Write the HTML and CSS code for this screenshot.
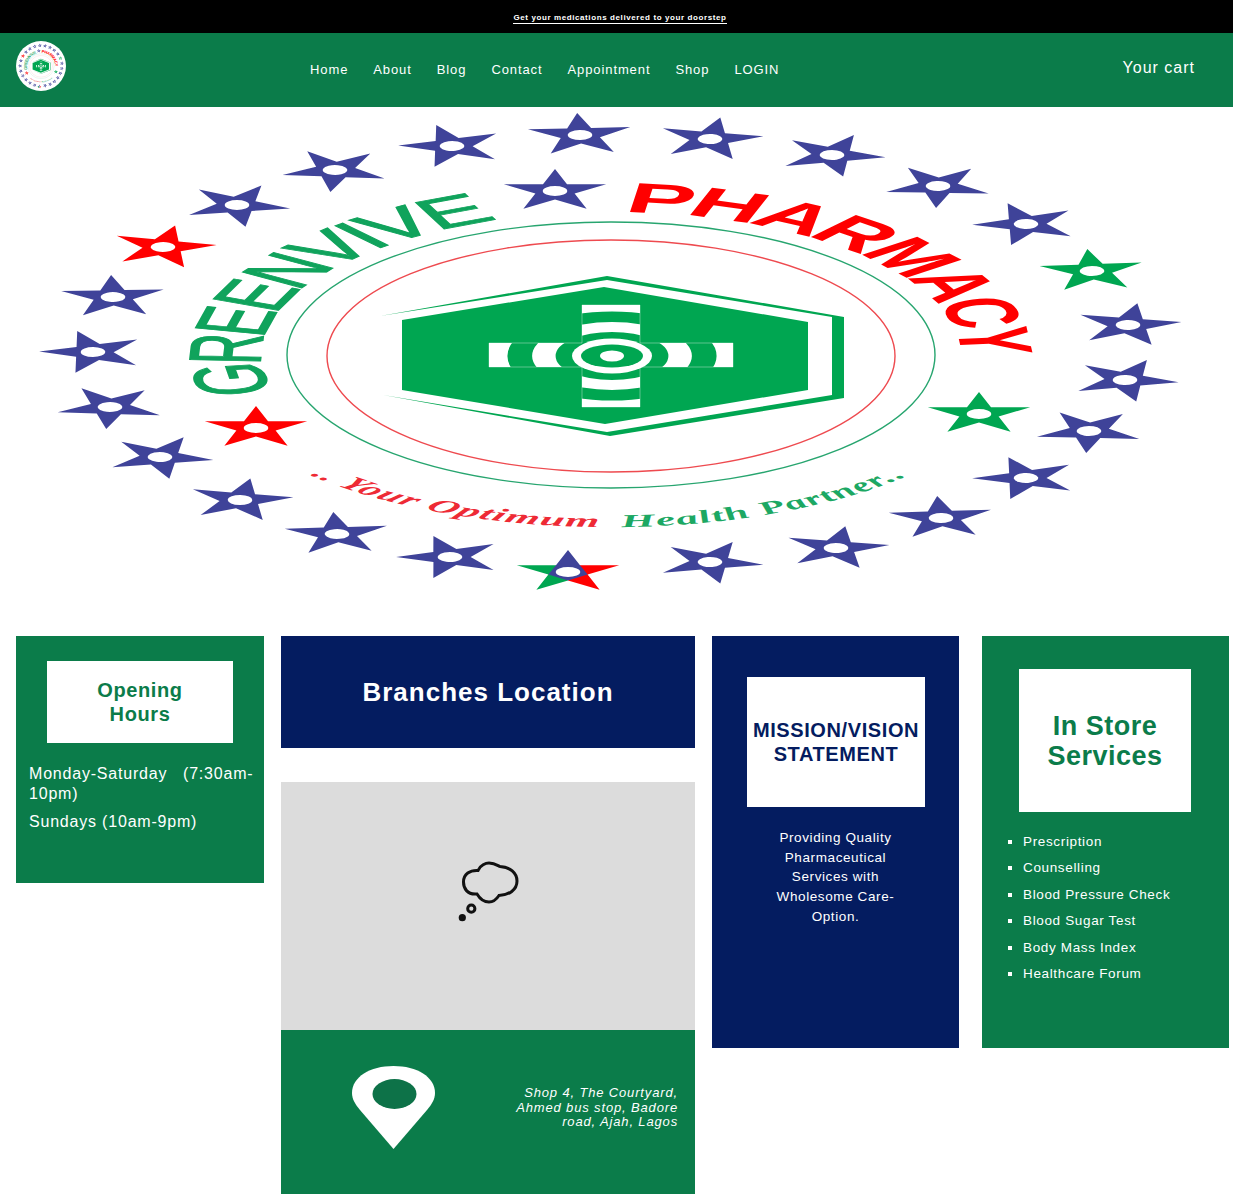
FILE: index.html
```html
<!DOCTYPE html>
<html lang="en">
<head>
<meta charset="utf-8">
<title>Greenvive Pharmacy</title>
<link rel="stylesheet" href="styles.css">
</head>
<body>
<div class="promo"><a class="promo-link">Get your medications delivered to your doorstep</a></div>
<header class="nav">
  <div class="brand">
    <svg class="brand-logo" viewBox="40 108 1140 490" preserveAspectRatio="none"><use href="#logo-art"/></svg>
  </div>
  <nav class="links">
    <a>Home</a><a>About</a><a>Blog</a><a>Contact</a><a>Appointment</a><a>Shop</a><a>LOGIN</a>
  </nav>
  <a class="cart">Your cart</a>
</header>

<svg class="hero" viewBox="0 107 1233 513">
  <defs>
    <path id="star" fill-rule="evenodd" d="M0-22 4.9-6.8H20.9L8 2.6 12.9 17.8 0 8.4-12.9 17.8-8 2.6-20.9-6.8H-4.9ZM5 0A5 5 0 1 0-5 0 5 5 0 1 0 5 0Z"/>
    <clipPath id="cross-clip">
      <path d="M582 305H640V343H733V367H640V407H582V367H489V343H582Z"/>
    </clipPath>
    <path id="arc-green" d="M-139 37.3A144 144 0 0 1-40-138.300"/>
    <path id="arc-red" d="M5-143.900A144 144 0 0 1 144 4"/>
    <path id="arc-tag-red" d="M-124 119A171 171 0 0 0-5 171"/>
    <path id="arc-tag-green" d="M4.5 171A171 171 0 0 0 122 120"/>
  </defs>
  <g id="logo-art">
    <g class="st-blue">
      <use href="#star" transform="translate(580 135) scale(2.45 1) rotate(-3)"/>
      <use href="#star" transform="translate(452 146) scale(2.45 1) rotate(-17)"/>
      <use href="#star" transform="translate(335 170) scale(2.45 1) rotate(-31)"/>
      <use href="#star" transform="translate(237 205) scale(2.45 1) rotate(-45)"/>
      <use href="#star" transform="translate(113 297) scale(2.45 1) rotate(-74)"/>
      <use href="#star" transform="translate(93 352) scale(2.45 1) rotate(-89)"/>
      <use href="#star" transform="translate(110 407) scale(2.45 1) rotate(-104)"/>
      <use href="#star" transform="translate(160 457) scale(2.45 1) rotate(-118)"/>
      <use href="#star" transform="translate(240 500) scale(2.45 1) rotate(-133)"/>
      <use href="#star" transform="translate(337 534) scale(2.45 1) rotate(-148)"/>
      <use href="#star" transform="translate(450 557) scale(2.45 1) rotate(-162)"/>
      <use href="#star" transform="translate(710 562) scale(2.45 1) rotate(169)"/>
      <use href="#star" transform="translate(836 548) scale(2.45 1) rotate(154)"/>
      <use href="#star" transform="translate(941 518) scale(2.45 1) rotate(140)"/>
      <use href="#star" transform="translate(1026 478) scale(2.45 1) rotate(125)"/>
      <use href="#star" transform="translate(1089 431) scale(2.45 1) rotate(111)"/>
      <use href="#star" transform="translate(1125 380) scale(2.45 1) rotate(96)"/>
      <use href="#star" transform="translate(1128 325) scale(2.45 1) rotate(82)"/>
      <use href="#star" transform="translate(1026 224) scale(2.45 1) rotate(52)"/>
      <use href="#star" transform="translate(938 186) scale(2.45 1) rotate(38)"/>
      <use href="#star" transform="translate(832 155) scale(2.45 1) rotate(24)"/>
      <use href="#star" transform="translate(710 139) scale(2.45 1) rotate(11)"/>
      <use href="#star" transform="translate(555 191) scale(2.45 1)"/>
    </g>
    <g class="st-red">
      <use href="#star" transform="translate(163 247) scale(2.45 1) rotate(-59)"/>
      <use href="#star" transform="translate(256 428) scale(2.45 1)"/>
    </g>
    <g class="st-green">
      <use href="#star" transform="translate(1092 271) scale(2.45 1) rotate(67)"/>
      <use href="#star" transform="translate(979 414) scale(2.45 1)"/>
    </g>
    <g transform="translate(568 572) scale(2.45 1)">
      <path class="st-green" d="M-20.9-6.8H-4.9L0 8.4-12.9 17.8-8 2.6Z"/>
      <path class="st-red" d="M20.9-6.8H4.9L0 8.4 12.9 17.8 8 2.6Z"/>
      <path class="st-blue" d="M0-22 4.9-6.8 8 2.6 0 8.4-8 2.6-4.9-6.8Z"/>
      <circle class="st-white" r="5"/>
    </g>

    <ellipse class="ring-green" cx="611" cy="355" rx="324" ry="133"/>
    <ellipse class="ring-red" cx="611" cy="356" rx="284" ry="116"/>

    <path class="hex" d="M380 316 607 276 844 317V398L610 436 383 395 607 432 832 395V317L607 280Z"/>
    <path class="hex" d="M402 320 604 287 808 322V390L605 424 402 390Z"/>
    <path class="cross-line" d="M582 305H640V343H733V367H640V407H582V367H489V343H582Z"/>
    <g clip-path="url(#cross-clip)">
      <g transform="translate(612 356) scale(2.35 1)">
        <circle class="cross-ring" r="50" stroke-width="11"/>
        <circle class="cross-ring" r="29" stroke-width="10"/>
      </g>
    </g>
    <ellipse class="st-white" cx="612" cy="356" rx="40" ry="17.5"/>
    <ellipse class="hex" cx="612" cy="356" rx="31" ry="11.5"/>
    <ellipse class="st-white" cx="612" cy="356" rx="12" ry="5.5"/>

    <g transform="translate(611 356) scale(2.43 1)">
      <text class="arc-title arc-title-green"><textPath href="#arc-green" textLength="218" lengthAdjust="spacing">GREENVIVE</textPath></text>
      <text class="arc-title arc-title-red"><textPath href="#arc-red" textLength="222" lengthAdjust="spacing">PHARMACY</textPath></text>
      <text class="arc-tag arc-tag-red"><textPath href="#arc-tag-red" textLength="134" lengthAdjust="spacing">.. Your Optimum</textPath></text>
      <text class="arc-tag arc-tag-green"><textPath href="#arc-tag-green" textLength="132" lengthAdjust="spacing">Health Partner..</textPath></text>
    </g>
  </g>
</svg>

<main class="cards">
  <section class="card card-hours">
    <div class="head-box head-hours"><h2>Opening Hours</h2></div>
    <p>Monday-Saturday&nbsp;&nbsp; (7:30am-10pm)</p>
    <p>Sundays (10am-9pm)</p>
  </section>

  <section class="branches">
    <div class="branches-head"><h2>Branches Location</h2></div>
    <div class="map">
      <svg class="map-icon" viewBox="36 18 64 64">
        <path class="cloud" d="M57 53C47 54 43.500 47 43.500 41 43.500 33 50 29 58 29.500 60 24 66 22 69 22 74 22 77 24 80 25.500 90 26 97 32 97 40 97 49 89 54 79 54.500 76 59 72 61 69 61 64 61 60 58 57 53Z"/>
        <circle class="cloud" cx="51.300" cy="67.700" r="3.600"/>
        <circle class="cloud-dot" cx="42.300" cy="76.700" r="3.600"/>
      </svg>
    </div>
    <div class="address">
      <svg class="pin" viewBox="0 0 83 83">
        <path class="pin-body" d="M41.500 83 8 44C3 38 0 33 0 27 0 11 18 0 41.500 0 65 0 83 11 83 27 83 33 80 38 75 44Z"/>
        <ellipse class="pin-hole" cx="42.500" cy="28" rx="22" ry="15"/>
      </svg>
      <p>Shop 4, The Courtyard, Ahmed bus stop, Badore road, Ajah, Lagos</p>
    </div>
  </section>

  <section class="card card-mission">
    <div class="head-box head-mission"><h2>MISSION/VISION STATEMENT</h2></div>
    <p>Providing Quality Pharmaceutical Services with Wholesome Care-Option.</p>
  </section>

  <section class="card card-services">
    <div class="head-box head-services"><h2>In Store Services</h2></div>
    <ul>
      <li>Prescription</li>
      <li>Counselling</li>
      <li>Blood Pressure Check</li>
      <li>Blood Sugar Test</li>
      <li>Body Mass Index</li>
      <li>Healthcare Forum</li>
    </ul>
  </section>
</main>
</body>
</html>
```
FILE: styles.css
```css
* { box-sizing: border-box; }
html, body { margin: 0; padding: 0; }
body {
  font-family: "Liberation Sans", Arial, sans-serif;
  background: #fff;
  color: #fff;
  letter-spacing: 1px;
}
h2, p, ul { margin: 0; padding: 0; }

.promo {
  height: 33px;
  background: #000;
  display: flex;
  justify-content: center;
  padding: 13px 0 0 7px;
}
.promo-link {
  height: 11px;
  font-size: 8px;
  line-height: 10px;
  font-weight: 700;
  letter-spacing: .6px;
  border-bottom: 1px solid #fff;
  color: #fff;
}

.nav {
  height: 74px;
  background: #0b7c4a;
  display: flex;
  align-items: center;
  padding: 0 38px 0 16px;
}
.brand { width: 294px; height: 50px; }
.brand-logo {
  display: block;
  width: 50px;
  height: 50px;
  background: #fff;
  border-radius: 50%;
  padding: 2px;
  margin-top: -4px;
}
.links { display: flex; gap: 25px; font-size: 13px; letter-spacing: .9px; padding-bottom: 2px; }
.cart { margin-left: auto; font-size: 16px; margin-top: -5px; }

.hero { display: block; width: 1233px; height: 513px; }
.st-blue { fill: #3f4399; }
.st-red { fill: #ff0000; }
.st-green { fill: #00a651; }
.st-white { fill: #fff; }
.hex { fill: #00a651; }
.ring-green { fill: none; stroke: #27a56f; stroke-width: 1.4; }
.ring-red { fill: none; stroke: #ee4a4f; stroke-width: 1.4; }
.cross-line { fill: none; stroke: #fff; stroke-width: .6; opacity: .6; }
.cross-ring { fill: none; stroke: #fff; }
.arc-title { font-size: 42px; font-weight: 700; }
.arc-title-green { fill: #10a35c; font-weight: 400; stroke: #10a35c; stroke-width: .8; }
.arc-title-red { fill: #ff0000; }
.arc-tag { font-family: "Liberation Serif", serif; font-style: italic; font-weight: 700; font-size: 18px; }
.arc-tag-red { fill: #ee2a35; }
.arc-tag-green { fill: #1ca863; }

.cards {
  display: flex;
  align-items: flex-start;
  padding: 16px 0 0 16px;
}
.card { width: 248px; }
.card-hours {
  height: 247px;
  background: #0b7c4a;
  padding-top: 25px;
  font-size: 16px;
  line-height: 20px;
  letter-spacing: .8px;
}
.head-box {
  background: #fff;
  display: flex;
  align-items: center;
  justify-content: center;
  text-align: center;
}
.head-hours {
  height: 82px;
  margin: 0 31px 21px;
  padding: 0 40px;
  color: #0b7c4a;
  font-size: 20px;
  line-height: 24px;
  letter-spacing: .6px;
}
.head-hours h2 { font-size: inherit; }
.card-hours p { padding: 0 9px 0 13px; margin-bottom: 8px; }

.branches { width: 414px; margin-left: 17px; }
.branches-head {
  height: 112px;
  background: #041c60;
  display: flex;
  align-items: center;
  justify-content: center;
}
.branches-head h2 { font-size: 26px; letter-spacing: 1px; }
.map {
  height: 248px;
  margin-top: 34px;
  background: #dcdcdc;
  display: flex;
  align-items: center;
  justify-content: center;
  padding-bottom: 30px;
}
.map-icon { width: 64px; height: 64px; display: block; }
.cloud { fill: none; stroke: #111; stroke-width: 3; }
.cloud-dot { fill: #111; }
.address {
  height: 164px;
  background: #0b7c4a;
  display: flex;
  align-items: flex-start;
  justify-content: space-between;
  padding: 36px 17px 0 71px;
}
.pin { width: 83px; height: 83px; display: block; flex: none; }
.pin-body { fill: #fff; }
.pin-hole { fill: #0d7248; }
.address p {
  width: 170px;
  margin-top: 20px;
  text-align: right;
  font-style: italic;
  font-size: 13px;
  line-height: 14.600px;
  letter-spacing: .85px;
}

.card-mission {
  width: 247px;
  height: 412px;
  margin-left: 17px;
  background: #041c60;
  padding-top: 41px;
  font-size: 13.500px;
  line-height: 19.700px;
  letter-spacing: .6px;
  text-align: center;
}
.head-mission {
  height: 130px;
  margin: 0 34px 21px 35px;
  color: #041c60;
  font-size: 20px;
  line-height: 24px;
}
.head-mission h2 { font-size: inherit; letter-spacing: .6px; }
.card-mission p { padding: 0 45px; }

.card-services {
  width: 247px;
  height: 412px;
  margin-left: 23px;
  background: #0b7c4a;
  padding-top: 33px;
}
.head-services {
  height: 143px;
  margin: 0 38px 17px 37px;
  padding: 0 20px;
  color: #0b7c4a;
  font-size: 27px;
  line-height: 30px;
  letter-spacing: .5px;
}
.head-services h2 { font-size: inherit; }
.card-services ul {
  padding-left: 41px;
  list-style: square;
  font-size: 13.500px;
  line-height: 26.400px;
  letter-spacing: .65px;
}
```
